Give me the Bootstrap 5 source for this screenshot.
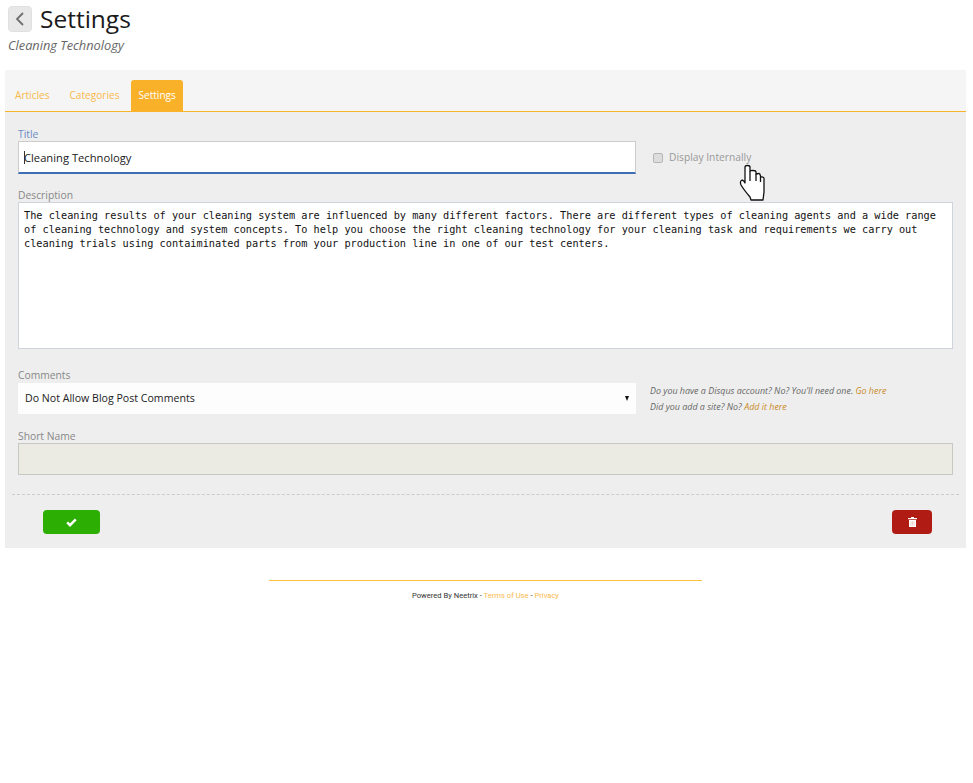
<!DOCTYPE html>
<html lang="en">
<head>
<meta charset="utf-8">
<title>Settings</title>
<link href="https://cdn.jsdelivr.net/npm/bootstrap@5.3.0/dist/css/bootstrap.min.css" rel="stylesheet">
<style>
body{font-family:"Open Sans",sans-serif;background:#fff;color:#222;font-size:11px;overflow:hidden}
.page-head{padding:4px 8px 0;height:70px}
.title-line{display:flex;align-items:center;gap:8px;height:30px}
.back-tile{width:24px;height:26px;background:#e8e8e8;border:1px solid #e0e0e0;border-radius:4px;display:flex;align-items:center;justify-content:center}
.head-title{font-size:24.500px;line-height:30px;font-weight:400;margin:0;color:#1a1a1a}
.head-sub{font-size:12.800px;font-style:italic;color:#666;line-height:20px;margin-top:1px}
.panel-box{margin:0 7px 0 5px;background:#eee;height:478px;position:relative}
.tab-strip{background:#f5f5f5;height:42px;box-shadow:inset 0 -1px 0 #f9b52a;padding:10px 0 0 3px;flex-wrap:nowrap}
.tab-strip .nav-link{font-size:10.100px;line-height:15px;color:#f9b94a;padding:8px 7px 8px;border:0;border-radius:3px 3px 0 0;height:31px;background:transparent}
.tab-strip .nav-link:first-child{margin-right:6px}
.tab-strip .nav-link:nth-child(2){margin-right:5px}
.tab-strip .nav-link.active{background:#f9b12a;color:#fff;border:0}
.form-area{padding:14px 13px 0}
.fld-label{display:block;font-size:10.300px;line-height:14px;padding-top:1px;color:#888;margin:0}
.fld-label.focus{color:#6b8cc4}
.top-row{display:flex;align-items:center;gap:17px}
.title-col{width:618px;flex:none}
.title-input.form-control{height:33px;border:1px solid #ccc;border-bottom:2px solid #3e6fb5;border-radius:0;padding:0 5px;font-size:11.200px;color:#222;box-shadow:none;background:#fff;font-family:inherit}
.check-wrap{display:flex;align-items:center;gap:6px;margin:15px 0 0;color:#999;font-size:10.250px}
.check-wrap .form-check-input{width:10px;height:10px;margin:0;border:1px solid #b5b5b5;background-color:#ddd;border-radius:2px}
.desc-label{margin-top:13px}
.desc-input.form-control{height:147px;border:1px solid #cfd3dc;border-radius:0;padding:5px;font-family:"DejaVu Sans Mono",monospace;font-size:10.240px;line-height:14px;color:#111;background:#fff;resize:none;box-shadow:none}
.comments-label{margin-top:18px}
.comment-row{display:flex;gap:14px;align-items:flex-start;margin-top:1px}
.comment-select{width:618px;flex:none;height:31px;background:#fdfdfd;font-size:10.600px;color:#222;display:flex;align-items:center;justify-content:space-between;padding:0 7px}
.select-arrow{width:0;height:0;border-left:2.500px solid transparent;border-right:2.500px solid transparent;border-top:5px solid #111}
.hint-text{font-size:8.920px;font-style:italic;color:#666;line-height:16px}
.hint-text a{color:#c98a28;text-decoration:none}
.short-label{margin-top:13px}
.short-input{height:32px;background:#ebeae3;border:1px solid #c8c8c2}
.rule-dash{border-top:1px dashed #ccc;margin:19px -6px 0}
.action-row{display:flex;justify-content:space-between;padding:15px 21px 0 25px}
.act-btn.btn{height:24px;border:0;border-radius:4px;padding:0;display:flex;align-items:center;justify-content:center}
.act-ok.btn{width:57px;background:#2dae03}
.act-del.btn{width:40px;background:#b01b14}
.foot-area{margin-top:32px;text-align:center}
.foot-rule{width:433px;height:1px;margin:0 0 0 269px;background:#fbc13f}
.foot-text{width:433px;margin:8px 0 0 269px;font-size:7.600px;line-height:14px;color:#333;font-family:"Roboto",sans-serif}
.foot-text a{color:#f9b94a;text-decoration:none}
.caret-mark{position:absolute;left:19px;top:81px;width:1px;height:13px;background:#333}
.hand-cursor{position:absolute;left:733px;top:94px}
</style>
</head>
<body>
<div class="page-head">
  <div class="title-line">
    <div class="back-tile">
      <svg width="10" height="16" viewBox="0 0 10 16"><path d="M8 2 2 8l6 6" fill="none" stroke="#6f6f6f" stroke-width="1.8"/></svg>
    </div>
    <h1 class="head-title">Settings</h1>
  </div>
  <div class="head-sub">Cleaning Technology</div>
</div>
<div class="panel-box">
  <nav class="nav tab-strip">
    <a class="nav-link" href="#">Articles</a>
    <a class="nav-link" href="#">Categories</a>
    <a class="nav-link active" href="#">Settings</a>
  </nav>
  <div class="form-area">
    <div class="top-row">
      <div class="title-col">
        <label class="fld-label focus">Title</label>
        <input class="form-control title-input" value="Cleaning Technology">
      </div>
      <label class="check-wrap"><input type="checkbox" class="form-check-input"> Display Internally</label>
    </div>
    <label class="fld-label desc-label">Description</label>
    <textarea class="form-control desc-input">The cleaning results of your cleaning system are influenced by many different factors. There are different types of cleaning agents and a wide range of cleaning technology and system concepts. To help you choose the right cleaning technology for your cleaning task and requirements we carry out cleaning trials using contaiminated parts from your production line in one of our test centers.</textarea>
    <label class="fld-label comments-label">Comments</label>
    <div class="comment-row">
      <div class="comment-select"><span>Do Not Allow Blog Post Comments</span><span class="select-arrow"></span></div>
      <div class="hint-text">Do you have a Disqus account? No? You'll need one. <a href="#">Go here</a><br>Did you add a site? No? <a href="#">Add it here</a></div>
    </div>
    <label class="fld-label short-label">Short Name</label>
    <div class="short-input"></div>
    <div class="rule-dash"></div>
    <div class="action-row">
      <button class="btn act-btn act-ok" aria-label="Save"><svg width="11" height="9" viewBox="0 0 11 9"><path d="M1.2 4.4 4 7.2 9.8 1.4" fill="none" stroke="#fff" stroke-width="2.4"/></svg></button>
      <button class="btn act-btn act-del" aria-label="Delete"><svg width="9" height="10" viewBox="0 0 9 10"><path d="M3 0h3v1h3v1.3H0V1h3zM1 3h7v7H1z" fill="#fff"/><path d="M3 4.2v4.5M4.5 4.2v4.5M6 4.2v4.5" stroke="#e8b5b2" stroke-width=".6"/></svg></button>
    </div>
  </div>
  <span class="caret-mark"></span>
  <svg class="hand-cursor" width="28" height="38" viewBox="0 0 28 38"><path d="M7 3Q7 1.500 9.500 1.500T12 3V7Q12 6.500 15 6.500T18 8V10Q20 9.500 21 9.500T22.500 12V13Q25 12.500 26 14V28L25 36H13L12 33Q6 26 3 21Q1.500 17 4 16Q6 16.500 7 19Z" fill="#fff" stroke="#111" stroke-width="1.300" stroke-linejoin="round"/><path d="M12 7V17M18 10V17M22.500 13V18" fill="none" stroke="#111" stroke-width="1.300"/></svg>
</div>
<div class="foot-area">
  <div class="foot-rule"></div>
  <div class="foot-text">Powered By Neetrix - <a href="#">Terms of Use</a> - <a href="#">Privacy</a></div>
</div>
</body>
</html>
